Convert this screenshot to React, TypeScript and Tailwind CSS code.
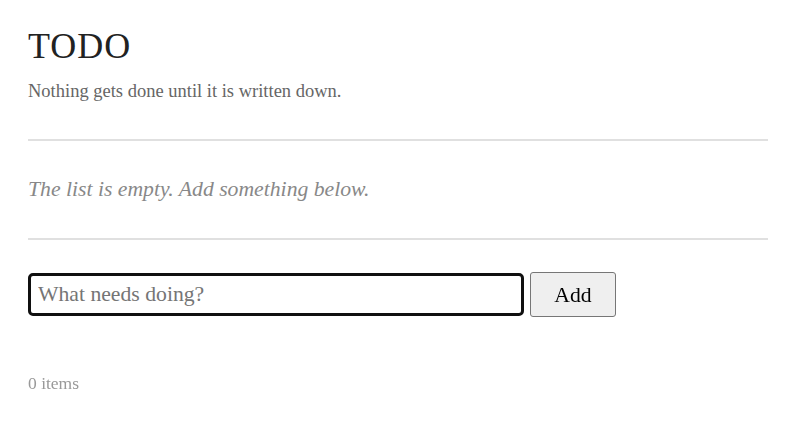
import React, { useState } from 'react';

const App: React.FC = () => {
    const [text, setText] = useState<string>('');
    const [items, setItems] = useState<string[]>([]);

    const handleSubmit = (event: React.FormEvent) => {
        event.preventDefault();
        if (!text.trim()) return;
        setItems([...items, text.trim()]);
        setText('');
    };

    return (
        <div className="min-h-[442px] bg-white font-['Liberation_Serif','Times_New_Roman',serif]">
            <div className="ml-[28px] w-[740px] pt-[25px]">
                <h1 className="text-[36px] leading-[1.2] font-normal tracking-[1px] text-[#222]">TODO</h1>
                <p className="mt-[10px] text-[18.5px] leading-[1.5] text-[#666]">Nothing gets done until it is written down.</p>

                <div className="mt-[33px] border-t-2 border-[#e0e0e0] pt-8 pb-[33px]">
                    {items.length === 0 ? (
                        <p className="text-[21.7px] leading-[1.5] italic text-[#888]">The list is empty. Add something below.</p>
                    ) : (
                        <ul>
                            {items.map((item, i) => (
                                <li key={i} className="text-[20px] leading-[1.5] text-[#222]">{item}</li>
                            ))}
                        </ul>
                    )}
                </div>

                <form onSubmit={handleSubmit} className="border-t-2 border-[#e0e0e0] pt-8 flex items-center gap-[6px]">
                    <input
                        autoFocus
                        type="text"
                        value={text}
                        onChange={(e) => setText(e.target.value)}
                        placeholder="What needs doing?"
                        className="w-[496px] h-[43px] px-[7px] border-[3px] border-[#101010] rounded-[5px] outline-none text-[21.7px] text-[#222] caret-[#222] placeholder:text-[#757575]"
                    />
                    <button type="submit" className="w-[86px] h-[45px] bg-[#efefef] border border-[#767676] rounded-[3px] text-[21.7px] text-black">
                        Add
                    </button>
                </form>

                <p className="mt-[53px] text-[17.5px] leading-[1.5] text-[#999]">{items.length} items</p>
            </div>
        </div>
    );
};

export default App;
